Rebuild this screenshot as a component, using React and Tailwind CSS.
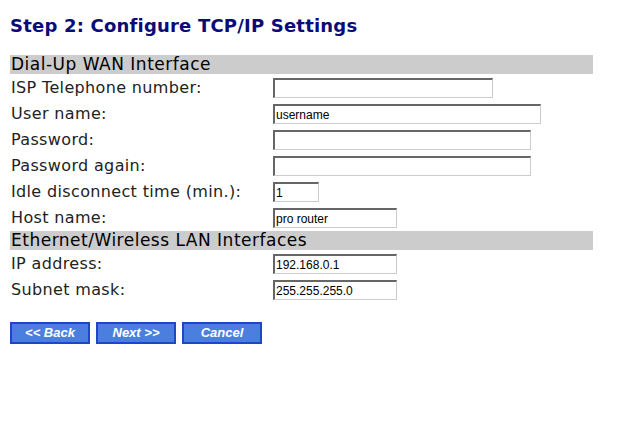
const rows1 = [
  { label: "ISP Telephone number:", w: "w-[220px]", value: "" },
  { label: "User name:", w: "w-[268px]", value: "username" },
  { label: "Password:", w: "w-[258px]", value: "" },
  { label: "Password again:", w: "w-[258px]", value: "" },
  { label: "Idle disconnect time (min.):", w: "w-[46px]", value: "1" },
  { label: "Host name:", w: "w-[124px]", value: "pro router" },
];

const rows2 = [
  { label: "IP address:", w: "w-[124px]", value: "192.168.0.1" },
  { label: "Subnet mask:", w: "w-[124px]", value: "255.255.255.0" },
];

const Field = ({ label, w, value }) => (
  <div className="flex flex-row items-center h-[26px]">
    <div className="w-[263px] pl-[1px] text-[16px] tracking-[0.35px] text-[#222]">{label}</div>
    <input
      className={`${w} h-[20px] px-[1px] bg-white text-[12px] text-black border-t-2 border-l-2 border-r border-b border-t-[#666] border-l-[#666] border-r-[#ccc] border-b-[#ccc] outline-none`}
      style={{ fontFamily: '"Liberation Sans", Arial, sans-serif' }}
      defaultValue={value}
    />
  </div>
);

const Bar = ({ children }) => (
  <div className="w-[583px] h-[19px] bg-[#cccccc] pl-[1px] text-[17px] tracking-[0.5px] leading-[19px] text-black">
    {children}
  </div>
);

const Btn = ({ children }) => (
  <button
    className="w-[80px] h-[22px] bg-[#4a7fe0] border-2 border-[#1f45c8] text-white text-[13px] font-bold italic leading-[18px]"
    style={{ fontFamily: '"Liberation Sans", Arial, sans-serif' }}
  >
    {children}
  </button>
);

export default function App() {
  return (
    <div
      className="w-[631px] h-[448px] bg-white pl-[10px] pt-[14px]"
      style={{ fontFamily: '"DejaVu Sans", Verdana, sans-serif' }}
    >
      <h1 className="text-[18px] font-bold tracking-[0.2px] text-[#0a0a78] leading-[24px]">
        Step 2: Configure TCP/IP Settings
      </h1>
      <div className="mt-[17px]">
        <Bar>Dial-Up WAN Interface</Bar>
        <div className="pt-[1px]">
          {rows1.map((r, i) => (
            <Field key={i} {...r} />
          ))}
        </div>
        <Bar>Ethernet/Wireless LAN Interfaces</Bar>
        <div className="pt-[1px]">
          {rows2.map((r, i) => (
            <Field key={i} {...r} />
          ))}
        </div>
      </div>
      <div className="flex flex-row gap-[6px] mt-[19px]">
        <Btn>&lt;&lt; Back</Btn>
        <Btn>Next &gt;&gt;</Btn>
        <Btn>Cancel</Btn>
      </div>
    </div>
  );
}
